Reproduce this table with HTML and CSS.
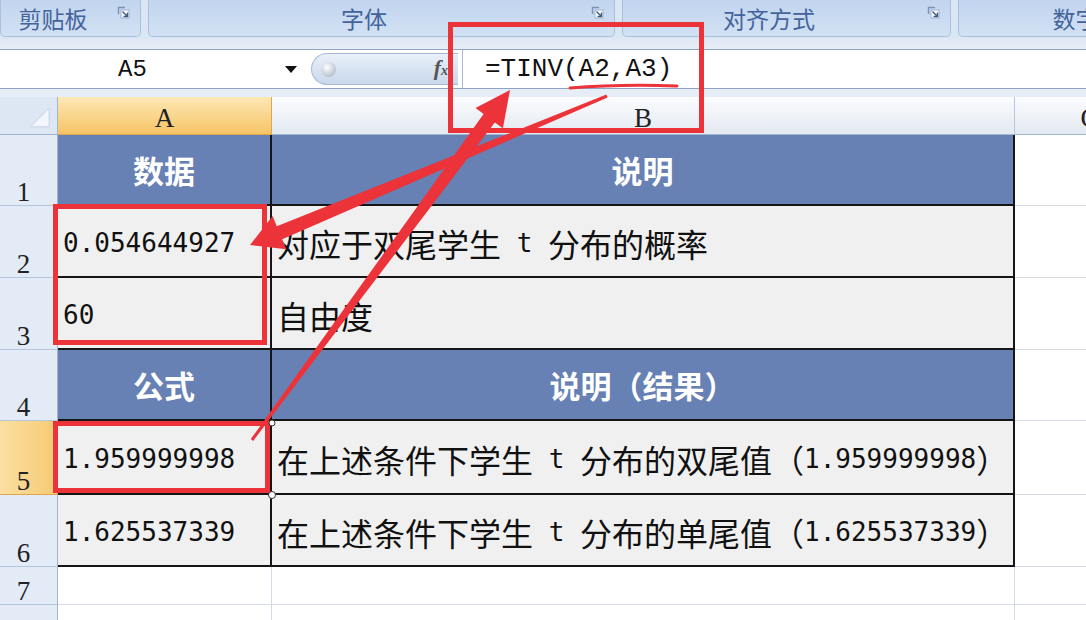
FILE: index.html
```html
<!DOCTYPE html>
<html lang="zh-CN">
<head>
  <meta charset="UTF-8">
  <title>TINV 函数</title>
  <link rel="stylesheet" href="styles.css">
</head>
<body>
  <div class="ribbon">
    <div class="group g1">
      <span class="glabel">剪贴板</span>
      <svg class="launcher" viewBox="0 0 13 13"><path d="M1.5 8V1.5h6.5" fill="none" stroke="#7d93b5" stroke-width="1.4"/><rect x="4" y="4" width="8" height="8" fill="#fff" stroke="#9eb2cf"/><path d="M5.5 5.5l5 5M10.5 6.5v4h-4" fill="none" stroke="#3d5a86" stroke-width="1.4"/></svg>
    </div>
    <div class="group g2">
      <span class="glabel">字体</span>
      <svg class="launcher" viewBox="0 0 13 13"><path d="M1.5 8V1.5h6.5" fill="none" stroke="#7d93b5" stroke-width="1.4"/><rect x="4" y="4" width="8" height="8" fill="#fff" stroke="#9eb2cf"/><path d="M5.5 5.5l5 5M10.5 6.5v4h-4" fill="none" stroke="#3d5a86" stroke-width="1.4"/></svg>
    </div>
    <div class="group g3">
      <span class="glabel">对齐方式</span>
      <svg class="launcher" viewBox="0 0 13 13"><path d="M1.5 8V1.5h6.5" fill="none" stroke="#7d93b5" stroke-width="1.4"/><rect x="4" y="4" width="8" height="8" fill="#fff" stroke="#9eb2cf"/><path d="M5.5 5.5l5 5M10.5 6.5v4h-4" fill="none" stroke="#3d5a86" stroke-width="1.4"/></svg>
    </div>
    <div class="group g4">
      <span class="glabel">数字</span>
      <svg class="launcher" viewBox="0 0 13 13"><path d="M1.5 8V1.5h6.5" fill="none" stroke="#7d93b5" stroke-width="1.4"/><rect x="4" y="4" width="8" height="8" fill="#fff" stroke="#9eb2cf"/><path d="M5.5 5.5l5 5M10.5 6.5v4h-4" fill="none" stroke="#3d5a86" stroke-width="1.4"/></svg>
    </div>
  </div>
  <div class="ribbon-foot"></div>

  <div class="formula-bar">
    <div class="namebox">
      <span class="cellref">A5</span>
      <span class="caret"></span>
    </div>
    <div class="fx-pill">
      <span class="knob"></span>
      <span class="fx">f<small>x</small></span>
    </div>
    <div class="formula">=TINV(A2,A3)</div>
  </div>
  <div class="bar-foot"></div>

  <div class="sheet">
    <div class="corner">
      <svg viewBox="0 0 58 38"><path d="M50 11V30H31Z" fill="#f3f6fa" stroke="#c5d2e3"/></svg>
    </div>
    <div class="ch ch-active">A</div>
    <div class="ch">B</div>
    <div class="ch">C</div>

    <div class="rh">1</div>
    <div class="hd">数据</div>
    <div class="hd">说明</div>
    <div class="gc"></div>

    <div class="rh">2</div>
    <div class="cell"><span class="m">0.054644927</span></div>
    <div class="cell">对应于双尾学生<span class="m"> t </span>分布的概率</div>
    <div class="gc"></div>

    <div class="rh">3</div>
    <div class="cell"><span class="m">60</span></div>
    <div class="cell">自由度</div>
    <div class="gc"></div>

    <div class="rh">4</div>
    <div class="hd">公式</div>
    <div class="hd">说明（结果）</div>
    <div class="gc"></div>

    <div class="rh rh-active">5</div>
    <div class="cell"><span class="m">1.959999998</span></div>
    <div class="cell">在上述条件下学生<span class="m"> t </span>分布的双尾值（<span class="m">1.959999998</span>）</div>
    <div class="gc"></div>

    <div class="rh">6</div>
    <div class="cell"><span class="m">1.625537339</span></div>
    <div class="cell">在上述条件下学生<span class="m"> t </span>分布的单尾值（<span class="m">1.625537339</span>）</div>
    <div class="gc"></div>

    <div class="rh">7</div>
    <div class="gc"></div>
    <div class="gc"></div>
    <div class="gc"></div>

    <div class="rh">8</div>
    <div class="gc"></div>
    <div class="gc"></div>
    <div class="gc"></div>
  </div>

  <!-- red annotations drawn over the sheet -->
  <svg class="marks" viewBox="0 0 1086 620">
    <g fill="none" stroke="#ec3339" stroke-width="5">
      <rect x="450.5" y="24.5" width="251" height="106"/>
      <rect x="55.5" y="206.5" width="209" height="136"/>
      <rect x="55.5" y="423.5" width="212" height="67"/>
    </g>
    <path d="M570 88Q620 84 677 86" fill="none" stroke="#ec3339" stroke-width="3" stroke-linecap="round"/>
    <polygon fill="#ec3339" points="606.4,94.6 276.8,226.2 272.6,216.1 250,245 286.4,249.3 282.2,239.2 607.6,97.4"/>
    <polygon fill="#ec3339" points="250.8,439.1 483.6,114 475.5,108.1 510,90 502.9,128.3 494.8,122.4 253.2,440.9"/>
    <g fill="#fff" stroke="#333" stroke-width="1">
      <circle cx="272" cy="423" r="3"/>
      <circle cx="272" cy="495" r="3.5"/>
    </g>
  </svg>
</body>
</html>
```

FILE: styles.css
```css
body {
  margin: 0;
  width: 1086px;
  height: 620px;
  overflow: hidden;
  position: relative;
  background: #ffffff;
  font-family: "Noto Sans CJK SC", sans-serif;
  color: #111111;
}

/* ribbon */
.ribbon {
  display: flex;
  gap: 7px;
  height: 38px;
  background: #dbe6f4;
  overflow: hidden;
}
.group {
  display: flex;
  flex: none;
  height: 37px;
  box-sizing: border-box;
  background: linear-gradient(#c1d5ee, #d2e1f4);
  border: 1px solid #a9c0dd;
  border-top: none;
  border-radius: 0 0 5px 5px;
}
.g1 { width: 141px; }
.g2 { width: 467px; }
.g3 { width: 329px; }
.g4 { width: 270px; }
.glabel {
  flex: 1;
  padding-right: 12px;
  text-align: center;
  font-size: 23px;
  line-height: 37px;
  color: #44639b;
}
.launcher {
  width: 13px;
  height: 13px;
  margin: 6px 10px 0 0;
}
.ribbon-foot {
  height: 11px;
  background: linear-gradient(#dde7f4, #e8eef7);
}

/* formula bar */
.formula-bar {
  display: flex;
  height: 38px;
  border-top: 1px solid #8da4c6;
  border-bottom: 1px solid #8da4c6;
  background: #ffffff;
}
.namebox {
  display: flex;
  align-items: center;
  width: 305px;
}
.cellref {
  flex: 1;
  padding-right: 20px;
  text-align: center;
  font-family: "Liberation Mono", monospace;
  font-size: 24px;
}
.caret {
  width: 0;
  height: 0;
  margin-right: 8px;
  border-left: 6px solid transparent;
  border-right: 6px solid transparent;
  border-top: 7px solid #111111;
}
.fx-pill {
  display: flex;
  align-items: center;
  justify-content: space-between;
  width: 147px;
  margin: 3px 0 3px 6px;
  padding: 0 10px 0 9px;
  box-sizing: border-box;
  border: 1px solid #a6b9d4;
  border-right: none;
  border-radius: 17px 0 0 17px;
  background: linear-gradient(#e9f0f9, #c9d8ec);
}
.knob {
  width: 15px;
  height: 15px;
  border-radius: 50%;
  background: radial-gradient(circle at 40% 35%, #ffffff, #b9c3cf 70%, #8f9aa8);
}
.fx {
  font-family: "Liberation Serif", serif;
  font-style: italic;
  font-weight: bold;
  font-size: 22px;
  line-height: 22px;
  color: #555555;
  white-space: nowrap;
}
.fx small {
  font-size: 14px;
}
.formula {
  flex: 1;
  display: flex;
  align-items: center;
  margin-left: 4px;
  padding-left: 22px;
  border-left: 1px solid #a6b9d4;
  font-family: "Liberation Mono", monospace;
  font-size: 26px;
}
.bar-foot {
  height: 8px;
  background: #e6edf6;
}

/* sheet */
.sheet {
  display: grid;
  grid-template-columns: 58px 214px 743px 150px;
  grid-template-rows: 38px 71px 72px 72px 71px 74px 72px 38px 38px;
}
.sheet > div {
  box-sizing: border-box;
  display: flex;
  align-items: center;
  overflow: hidden;
  white-space: nowrap;
}
.corner {
  background: #dde7f4;
  border-right: 1px solid #9fb5d0;
  border-bottom: 1px solid #9fb5d0;
}
.corner svg {
  width: 58px;
  height: 38px;
}
.ch {
  justify-content: center;
  padding-top: 6px;
  background: linear-gradient(#fbfcfe, #e3e9f1);
  border-right: 1px solid #b7c6da;
  border-bottom: 1px solid #9fb5d0;
  font-family: "Liberation Serif", serif;
  font-size: 27px;
  color: #222222;
}
.ch-active {
  background: linear-gradient(#fde8b6, #f6c466);
  border-right: 1px solid #e1a64c;
  border-bottom: 1px solid #e1a64c;
}
.rh {
  align-items: flex-end !important;
  justify-content: center;
  padding-right: 10px;
  line-height: 26px;
  background: #e3ebf6;
  border-right: 1px solid #9fb5d0;
  border-bottom: 1px solid #b5c6dc;
  font-family: "Liberation Serif", serif;
  font-size: 27px;
  color: #222222;
}
.rh-active {
  background: linear-gradient(to right, #fbdfa3, #f6ca74);
  border-right: 1px solid #e1a64c;
  border-bottom: 1px solid #e1a64c;
}
.hd {
  justify-content: center;
  background: #6781b4;
  border-right: 2px solid #151515;
  border-bottom: 2px solid #151515;
  color: #ffffff;
  font-weight: bold;
  font-size: 31px;
}
.cell {
  padding: 4px 0 0 5px;
  background: #f0f0f0;
  border-right: 2px solid #151515;
  border-bottom: 2px solid #151515;
  font-size: 32px;
}
.m {
  font-family: "DejaVu Sans Mono", monospace;
  font-size: 26px;
  white-space: pre;
}
.gc {
  background: #ffffff;
  border-right: 1px solid #d3dae6;
  border-bottom: 1px solid #d3dae6;
}

/* annotations */
.marks {
  position: absolute;
  top: 0;
  left: 0;
  width: 1086px;
  height: 620px;
  pointer-events: none;
}
```
